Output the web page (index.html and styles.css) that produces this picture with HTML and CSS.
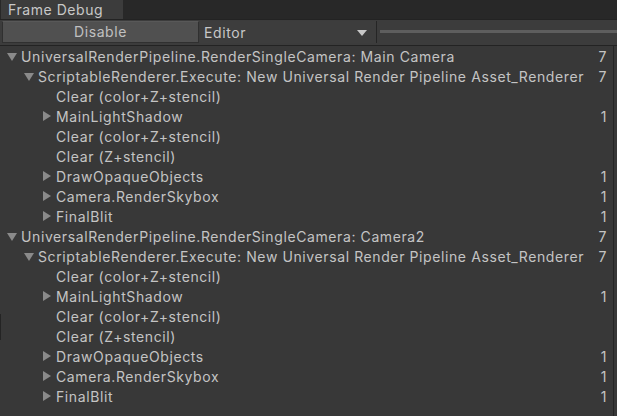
FILE: index.html
```html
<!DOCTYPE html>
<html>
<head>
<meta charset="utf-8">
<link rel="stylesheet" href="styles.css">
</head>
<body>
<div class="window">
  <div class="tabbar">
    <div class="tab">Frame Debug</div>
  </div>
  <div class="toolbar">
    <div class="btn">Disable</div>
    <div class="dropdown"><span>Editor</span><span class="caret"></span></div>
    <div class="slider"><div class="track"></div></div>
  </div>
  <div class="tree">
    <div class="row l0 open"><span class="arrow"></span><span class="label">UniversalRenderPipeline.RenderSingleCamera: Main Camera</span><span class="count">7</span></div>
    <div class="row l1 open"><span class="arrow"></span><span class="label">ScriptableRenderer.Execute: New Universal Render Pipeline Asset_Renderer</span><span class="count">7</span></div>
    <div class="row l2"><span class="arrow none"></span><span class="label">Clear (color+Z+stencil)</span><span class="count"></span></div>
    <div class="row l2 closed"><span class="arrow"></span><span class="label">MainLightShadow</span><span class="count">1</span></div>
    <div class="row l2"><span class="arrow none"></span><span class="label">Clear (color+Z+stencil)</span><span class="count"></span></div>
    <div class="row l2"><span class="arrow none"></span><span class="label">Clear (Z+stencil)</span><span class="count"></span></div>
    <div class="row l2 closed"><span class="arrow"></span><span class="label">DrawOpaqueObjects</span><span class="count">1</span></div>
    <div class="row l2 closed"><span class="arrow"></span><span class="label">Camera.RenderSkybox</span><span class="count">1</span></div>
    <div class="row l2 closed"><span class="arrow"></span><span class="label">FinalBlit</span><span class="count">1</span></div>
    <div class="row l0 open"><span class="arrow"></span><span class="label">UniversalRenderPipeline.RenderSingleCamera: Camera2</span><span class="count">7</span></div>
    <div class="row l1 open"><span class="arrow"></span><span class="label">ScriptableRenderer.Execute: New Universal Render Pipeline Asset_Renderer</span><span class="count">7</span></div>
    <div class="row l2"><span class="arrow none"></span><span class="label">Clear (color+Z+stencil)</span><span class="count"></span></div>
    <div class="row l2 closed"><span class="arrow"></span><span class="label">MainLightShadow</span><span class="count">1</span></div>
    <div class="row l2"><span class="arrow none"></span><span class="label">Clear (color+Z+stencil)</span><span class="count"></span></div>
    <div class="row l2"><span class="arrow none"></span><span class="label">Clear (Z+stencil)</span><span class="count"></span></div>
    <div class="row l2 closed"><span class="arrow"></span><span class="label">DrawOpaqueObjects</span><span class="count">1</span></div>
    <div class="row l2 closed"><span class="arrow"></span><span class="label">Camera.RenderSkybox</span><span class="count">1</span></div>
    <div class="row l2 closed"><span class="arrow"></span><span class="label">FinalBlit</span><span class="count">1</span></div>
  </div>
  <div class="divider"></div>
  <div class="edgebar"></div>
</div>
</body>
</html>
```
FILE: styles.css
```css
html, body {
  margin: 0;
  padding: 0;
  background: #383838;
}
.window {
  position: relative;
  width: 617px;
  height: 416px;
  overflow: hidden;
  font-family: Inter, "Noto Sans", sans-serif;
  font-size: 14px;
  letter-spacing: 0.6px;
  color: #c4c4c4;
  background: #383838;
  display: flex;
  flex-direction: column;
}
.tabbar {
  height: 19px;
  background: #282828;
  display: flex;
  align-items: flex-end;
  border-bottom: 1px solid #232323;
}
.tab {
  width: 122px;
  height: 19px;
  margin-left: 1px;
  padding-left: 7px;
  background: #3c3c3c;
  color: #c8c8c8;
  line-height: 19px;
  letter-spacing: 0.55px;
  box-sizing: border-box;
}
.toolbar {
  height: 25px;
  background: #3c3c3c;
  border-bottom: 1px solid #232323;
  display: flex;
  align-items: stretch;
  box-sizing: content-box;
}
.btn {
  width: 197px;
  margin: 1px 0 2px 2px;
  background: #505050;
  border: 1px solid #303030;
  border-top-color: #585858;
  color: #c0c0c0;
  text-align: center;
  line-height: 20px;
  box-sizing: border-box;
}
.dropdown {
  width: 163px;
  margin: 1px 0 2px 1px;
  background: #3d3d3d;
  border-right: 1px solid #252525;
  display: flex;
  justify-content: space-between;
  align-items: center;
  padding: 0 9px 0 4px;
  color: #c8c8c8;
}
.caret {
  width: 0;
  height: 0;
  border-left: 5px solid transparent;
  border-right: 5px solid transparent;
  border-top: 6px solid #c8c8c8;
  margin-top: 1px;
}
.slider {
  flex: 1;
  display: flex;
  align-items: center;
  padding-left: 3px;
  padding-bottom: 2px;
}
.track {
  height: 3px;
  width: 100%;
  background: #5e5e5e;
}
.tree {
  width: 613px;
}
.row {
  height: 20px;
  display: flex;
  align-items: center;
  white-space: nowrap;
}
.label {
  flex: 1;
}
.count {
  width: 20px;
  text-align: right;
  padding-right: 6px;
}
.arrow {
  width: 13px;
  height: 20px;
  position: relative;
  flex: none;
}
.l0 .arrow { margin-left: 6px; }
.l1 .arrow { margin-left: 23px; }
.l2 .arrow { margin-left: 41px; }
.l0 .label { margin-left: 2px; }
.l1 .label { margin-left: 2px; }
.l2 .label { margin-left: 2px; }
.open .arrow::before {
  content: "";
  position: absolute;
  left: 1px;
  top: 7px;
  border-left: 5px solid transparent;
  border-right: 5px solid transparent;
  border-top: 8px solid #8a8a8a;
}
.closed .arrow::before {
  content: "";
  position: absolute;
  left: 2px;
  top: 5px;
  border-top: 5px solid transparent;
  border-bottom: 5px solid transparent;
  border-left: 8px solid #8a8a8a;
}
.divider {
  position: absolute;
  left: 613px;
  top: 46px;
  width: 1px;
  height: 370px;
  background: #252525;
}
.edgebar {
  position: absolute;
  left: 0;
  top: 314px;
  width: 1px;
  height: 26px;
  background: #242424;
}
```
